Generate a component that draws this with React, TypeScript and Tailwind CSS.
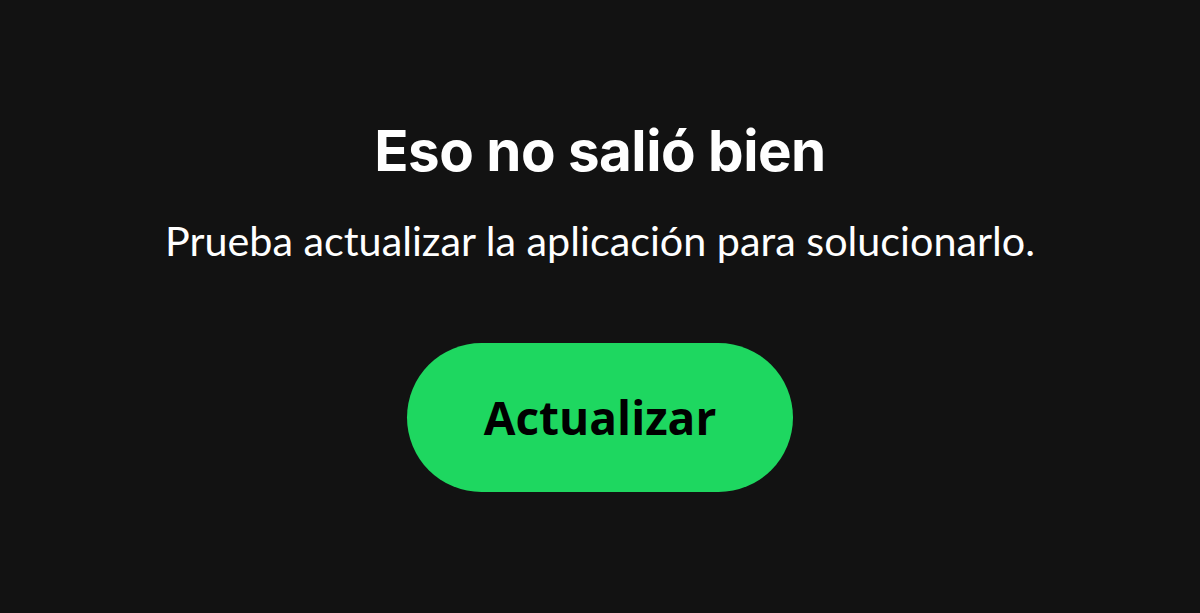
export default function App() {
  return (
    <div className="flex h-[613px] w-full flex-col items-center bg-[#121212] pt-[119px] text-white">
      <h1 className="font-['Inter',sans-serif] text-[56.5px] font-bold leading-[64px] tracking-[-0.5px]">
        Eso no salió bien
      </h1>
      <p className="mt-[33px] font-['Lato',sans-serif] text-[41.3px] leading-[48px]">
        Prueba actualizar la aplicación para solucionarlo.
      </p>
      <button className="mt-[79px] flex h-[149px] w-[386px] items-center justify-center rounded-full bg-[#1ed760] font-['Open_Sans',sans-serif] text-[46px] font-bold text-black">
        Actualizar
      </button>
    </div>
  )
}
